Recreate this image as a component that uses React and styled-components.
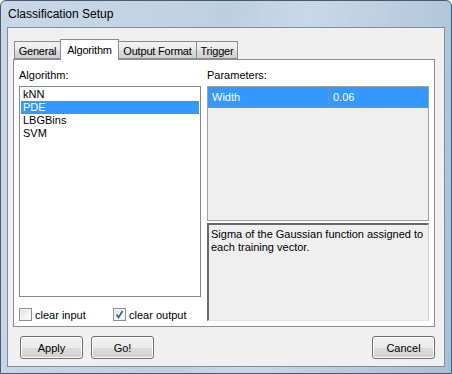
import styled, { createGlobalStyle } from "styled-components";

const GlobalStyle = createGlobalStyle`
  html, body {
    margin: 0;
    padding: 0;
    background: #ffffff;
  }
  body {
    font-family: "Liberation Sans", Arial, sans-serif;
    font-size: 11px;
    color: #000;
  }
`;

const algorithms = ["kNN", "PDE", "LBGBins", "SVM"];
const tabs = [
  { label: "General", width: 47 },
  { label: "Algorithm", width: 59 },
  { label: "Output Format", width: 79 },
  { label: "Trigger", width: 42 },
];

export default function App() {
  return (
    <>
      <GlobalStyle />
      <Window>
        <TitleBar>Classification Setup</TitleBar>
        <Client>
          <TabStrip>
            {tabs.map((t) => (
              <Tab key={t.label} $active={t.label === "Algorithm"} $w={t.width}>
                {t.label}
              </Tab>
            ))}
          </TabStrip>
          <TabPanel>
            <LeftColumn>
              <Label>Algorithm:</Label>
              <ListBox>
                {algorithms.map((a) => (
                  <ListItem key={a} $selected={a === "PDE"}>
                    {a}
                  </ListItem>
                ))}
              </ListBox>
              <CheckRow>
                <CheckLabel $w={94}>
                  <CheckBox />
                  clear input
                </CheckLabel>
                <CheckLabel>
                  <CheckBox>
                    <svg width="11" height="11" viewBox="0 0 11 11">
                      <path
                        d="M2.5 5.5 L4.5 8.5 L8.5 2"
                        fill="none"
                        stroke="#3d5a98"
                        strokeWidth="1.6"
                      />
                    </svg>
                  </CheckBox>
                  clear output
                </CheckLabel>
              </CheckRow>
            </LeftColumn>
            <RightColumn>
              <Label>Parameters:</Label>
              <Grid>
                <GridRow $selected>
                  <GridCell $w={121}>Width</GridCell>
                  <GridCell>0.06</GridCell>
                </GridRow>
              </Grid>
              <Description>
                Sigma of the Gaussian function assigned to each training vector.
              </Description>
            </RightColumn>
          </TabPanel>
          <ButtonRow>
            <Button>Apply</Button>
            <Button>Go!</Button>
            <Spacer />
            <Button>Cancel</Button>
          </ButtonRow>
        </Client>
      </Window>
    </>
  );
}

// STYLES

const Window = styled.div`
  box-sizing: border-box;
  width: 452px;
  height: 374px;
  display: flex;
  flex-direction: column;
  padding: 0 6px 6px 6px;
  border: 1px solid #4b5a6b;
  border-radius: 6px 6px 0 0;
  background: linear-gradient(
    100deg,
    #c9d8e8 0%,
    #bdd0e2 45%,
    #c8d8e8 60%,
    #a9bfd5 100%
  );
  box-shadow: inset -1px 0 0 #7fd3f0;
`;

const TitleBar = styled.div`
  height: 27px;
  display: flex;
  align-items: center;
  padding-left: 1px;
  font-family: "Liberation Sans", Arial, sans-serif;
  font-size: 12px;
  color: #000;
`;

const Client = styled.div`
  flex: 1;
  display: flex;
  flex-direction: column;
  background: #f0f0f0;
  border: 1px solid #7f8e9f;
  padding: 11px 9px 7px 5px;
`;

const TabStrip = styled.div`
  display: flex;
  align-items: flex-end;
  padding-left: 1px;
  height: 20px;
  position: relative;
  z-index: 1;
`;

const Tab = styled.div`
  box-sizing: border-box;
  width: ${(p) => p.$w}px;
  height: ${(p) => (p.$active ? 21 : 18)}px;
  margin-bottom: ${(p) => (p.$active ? -1 : 0)}px;
  margin-left: -1px;
  display: flex;
  align-items: center;
  justify-content: center;
  padding-top: ${(p) => (p.$active ? 0 : 1)}px;
  letter-spacing: -0.2px;
  border: 1px solid #898c95;
  border-bottom: ${(p) => (p.$active ? "none" : "1px solid #898c95")};
  background: ${(p) =>
    p.$active
      ? "#ffffff"
      : "linear-gradient(#f2f2f2 0%, #ebebeb 50%, #dddddd 51%, #cfcfcf 100%)"};
  position: relative;
  z-index: ${(p) => (p.$active ? 2 : 1)};
  &:first-child {
    margin-left: 0;
  }
`;

const TabPanel = styled.div`
  box-sizing: border-box;
  height: 268px;
  display: flex;
  gap: 6px;
  padding: 9px 4px 5px 5px;
  background: #ffffff;
  border: 1px solid #898c95;
`;

const LeftColumn = styled.div`
  width: 182px;
  display: flex;
  flex-direction: column;
`;

const RightColumn = styled.div`
  width: 222px;
  display: flex;
  flex-direction: column;
`;

const Label = styled.div`
  height: 17px;
  line-height: 13px;
`;

const ListBox = styled.div`
  box-sizing: border-box;
  height: 212px;
  border: 1px solid #828790;
  background: #ffffff;
  padding: 1px;
`;

const ListItem = styled.div`
  height: 13px;
  line-height: 13px;
  padding-left: 2px;
  background: ${(p) => (p.$selected ? "#3399ff" : "transparent")};
  color: ${(p) => (p.$selected ? "#ffffff" : "#000000")};
`;

const CheckRow = styled.div`
  display: flex;
  align-items: center;
  margin-top: 11px;
`;

const CheckLabel = styled.label`
  display: flex;
  align-items: center;
  gap: 3px;
  width: ${(p) => (p.$w ? `${p.$w}px` : "auto")};
`;

const CheckBox = styled.span`
  box-sizing: border-box;
  width: 13px;
  height: 13px;
  display: flex;
  align-items: center;
  justify-content: center;
  border: 1px solid #8e8f8f;
  background: linear-gradient(135deg, #dcdcdc 0%, #f4f4f4 60%, #ffffff 100%);
  box-shadow: inset 0 0 0 1px #f4f4f4;
`;

const Grid = styled.div`
  box-sizing: border-box;
  height: 135px;
  border: 1px solid #a0a0a0;
  background: #efefef;
`;

const GridRow = styled.div`
  display: flex;
  height: 20px;
  border-bottom: 1px solid #8c8c8c;
  background: ${(p) => (p.$selected ? "#3399ff" : "transparent")};
  color: ${(p) => (p.$selected ? "#ffffff" : "#000000")};
`;

const GridCell = styled.div`
  box-sizing: border-box;
  ${(p) => (p.$w ? `width: ${p.$w}px; border-right: 1px solid #8c8c8c;` : "flex: 1;")}
  display: flex;
  align-items: center;
  padding-left: 4px;
`;

const Description = styled.div`
  box-sizing: border-box;
  height: 98px;
  margin-top: 2px;
  padding: 3px 2px;
  line-height: 13px;
  background: #efefef;
  border-top: 2px solid #696969;
  border-left: 2px solid #696969;
  border-right: 1px solid #d4d0c8;
  border-bottom: 1px solid #e3e3e3;
`;

const ButtonRow = styled.div`
  display: flex;
  gap: 8px;
  margin-top: 9px;
  padding-left: 7px;
`;

const Spacer = styled.div`
  flex: 1;
`;

const Button = styled.button`
  box-sizing: border-box;
  width: 63px;
  height: 23px;
  padding: 0;
  font-family: "Liberation Sans", Arial, sans-serif;
  font-size: 11px;
  color: #000;
  border: 1px solid #707070;
  border-radius: 3px;
  background: linear-gradient(#f2f2f2 0%, #ebebeb 50%, #dddddd 51%, #cfcfcf 100%);
  box-shadow: inset 0 0 0 1px #fcfcfc;
`;
